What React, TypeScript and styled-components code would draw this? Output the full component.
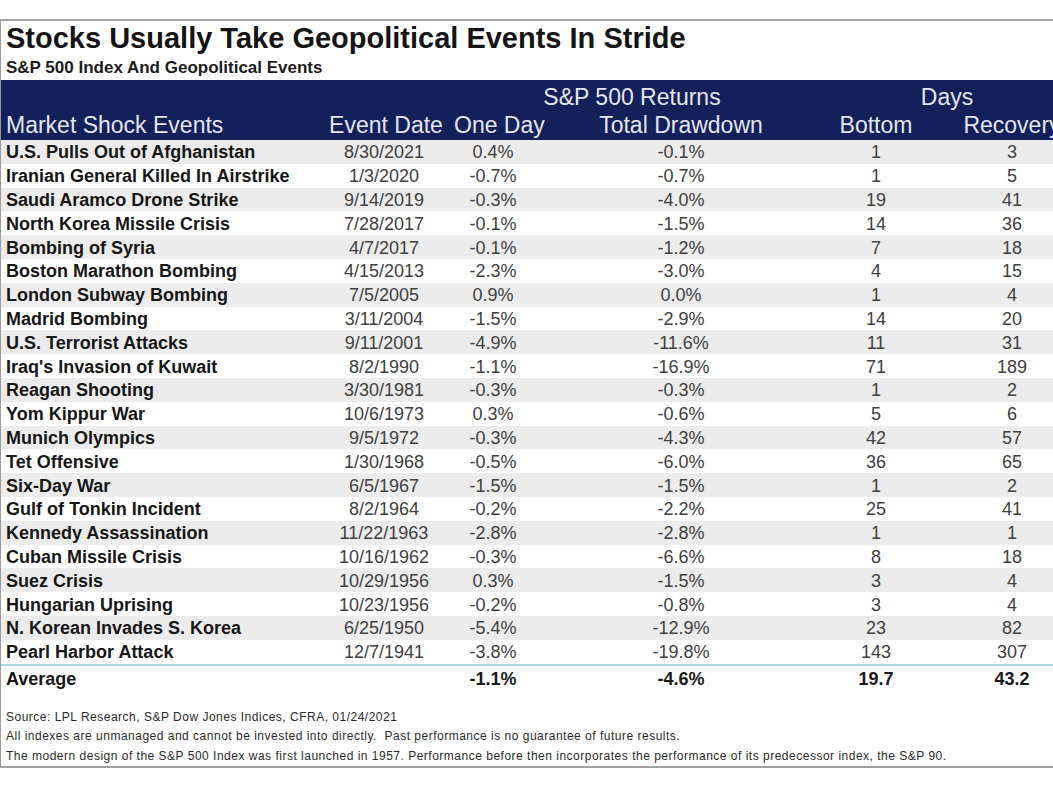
import React from "react";
import styled, { createGlobalStyle } from "styled-components";

const GlobalStyle = createGlobalStyle`
  html, body { margin: 0; padding: 0; background: #ffffff; }
  body { font-family: "Liberation Sans", Arial, sans-serif; overflow: hidden; }
`;

const Frame = styled.div`
  margin-top: 19px;
  width: 1053px;
  box-sizing: border-box;
  border-top: 2px solid #a4a4a4;
  border-left: 1px solid #9c9c9c;
  border-bottom: 2px solid #a0a0a0;
  overflow: hidden;
`;

const Title = styled.h1`
  margin: 0;
  padding-left: 5px;
  font-size: 29px;
  line-height: 35px;
  font-weight: 700;
  color: #141414;
  white-space: nowrap;
`;

const Subtitle = styled.h2`
  margin: 0;
  padding-left: 5px;
  font-size: 17px;
  line-height: 24px;
  font-weight: 700;
  color: #1c1c1c;
  white-space: nowrap;
`;

const COLS = "323px 120px 98px 278px 112px 160px";

const Table = styled.div`
  width: 1091px;
`;

const HeadBand = styled.div`
  background: #13205a;
  color: #e3e6f0;
  display: grid;
  grid-template-columns: ${COLS};
  grid-template-rows: 31px 29px;
  font-size: 23px;
  white-space: nowrap;
`;

const GroupHead = styled.div<{ $col: string; $shift?: number }>`
  grid-row: 1;
  grid-column: ${(p) => p.$col};
  display: flex;
  align-items: flex-end;
  justify-content: center;
  padding-right: ${(p) => p.$shift ?? 0}px;
  line-height: 28px;
`;

const ColHead = styled.div<{ $align?: "left" | "center"; $nudge?: number }>`
  grid-row: 2;
  text-align: ${(p) => p.$align ?? "center"};
  padding-left: ${(p) => (p.$align === "left" ? 5 : p.$nudge ?? 0)}px;
  line-height: 29px;
`;

const Row = styled.div<{ $shade: boolean }>`
  display: grid;
  grid-template-columns: ${COLS};
  box-sizing: border-box;
  height: 23.8px;
  padding-top: 2px;
  align-items: center;
  background: ${(p) => (p.$shade ? "#ececec" : "#ffffff")};
  font-size: 18px;
  white-space: nowrap;
`;

const AvgRow = styled(Row)`
  height: 27px;
  border-top: 2px solid #a9d8e4;
  font-weight: 700;
`;

const NameCell = styled.div`
  padding-left: 5px;
  font-weight: 700;
  color: #161616;
`;

const ValueCell = styled.div<{ $bold?: boolean }>`
  text-align: center;
  color: ${(p) => (p.$bold ? "#1a1a1a" : "#404040")};
  font-weight: ${(p) => (p.$bold ? 700 : 400)};
`;

const Footer = styled.div`
  margin-top: 17px;
  padding-left: 5px;
  font-size: 12px;
  letter-spacing: 0.5px;
  line-height: 19.5px;
  color: #2a2a2a;
  white-space: nowrap;
`;

type Ev = [string, string, string, string, string, string];

const events: Ev[] = [
  ["U.S. Pulls Out of Afghanistan", "8/30/2021", "0.4%", "-0.1%", "1", "3"],
  ["Iranian General Killed In Airstrike", "1/3/2020", "-0.7%", "-0.7%", "1", "5"],
  ["Saudi Aramco Drone Strike", "9/14/2019", "-0.3%", "-4.0%", "19", "41"],
  ["North Korea Missile Crisis", "7/28/2017", "-0.1%", "-1.5%", "14", "36"],
  ["Bombing of Syria", "4/7/2017", "-0.1%", "-1.2%", "7", "18"],
  ["Boston Marathon Bombing", "4/15/2013", "-2.3%", "-3.0%", "4", "15"],
  ["London Subway Bombing", "7/5/2005", "0.9%", "0.0%", "1", "4"],
  ["Madrid Bombing", "3/11/2004", "-1.5%", "-2.9%", "14", "20"],
  ["U.S. Terrorist Attacks", "9/11/2001", "-4.9%", "-11.6%", "11", "31"],
  ["Iraq's Invasion of Kuwait", "8/2/1990", "-1.1%", "-16.9%", "71", "189"],
  ["Reagan Shooting", "3/30/1981", "-0.3%", "-0.3%", "1", "2"],
  ["Yom Kippur War", "10/6/1973", "0.3%", "-0.6%", "5", "6"],
  ["Munich Olympics", "9/5/1972", "-0.3%", "-4.3%", "42", "57"],
  ["Tet Offensive", "1/30/1968", "-0.5%", "-6.0%", "36", "65"],
  ["Six-Day War", "6/5/1967", "-1.5%", "-1.5%", "1", "2"],
  ["Gulf of Tonkin Incident", "8/2/1964", "-0.2%", "-2.2%", "25", "41"],
  ["Kennedy Assassination", "11/22/1963", "-2.8%", "-2.8%", "1", "1"],
  ["Cuban Missile Crisis", "10/16/1962", "-0.3%", "-6.6%", "8", "18"],
  ["Suez Crisis", "10/29/1956", "0.3%", "-1.5%", "3", "4"],
  ["Hungarian Uprising", "10/23/1956", "-0.2%", "-0.8%", "3", "4"],
  ["N. Korean Invades S. Korea", "6/25/1950", "-5.4%", "-12.9%", "23", "82"],
  ["Pearl Harbor Attack", "12/7/1941", "-3.8%", "-19.8%", "143", "307"],
];

export default function App() {
  return (
    <>
      <GlobalStyle />
      <Frame>
        <Title>Stocks Usually Take Geopolitical Events In Stride</Title>
        <Subtitle>S&amp;P 500 Index And Geopolitical Events</Subtitle>
        <Table>
          <HeadBand>
            <GroupHead $col="3 / 5">S&amp;P 500 Returns</GroupHead>
            <GroupHead $col="5 / 7" $shift={18}>Days</GroupHead>
            <ColHead $align="left">Market Shock Events</ColHead>
            <ColHead $nudge={4}>Event Date</ColHead>
            <ColHead $nudge={10}>One Day</ColHead>
            <ColHead>Total Drawdown</ColHead>
            <ColHead>Bottom</ColHead>
            <ColHead>Recovery</ColHead>
          </HeadBand>
          {events.map((e, i) => (
            <Row key={e[0]} $shade={i % 2 === 0}>
              <NameCell>{e[0]}</NameCell>
              <ValueCell>{e[1]}</ValueCell>
              <ValueCell>{e[2]}</ValueCell>
              <ValueCell>{e[3]}</ValueCell>
              <ValueCell>{e[4]}</ValueCell>
              <ValueCell>{e[5]}</ValueCell>
            </Row>
          ))}
          <AvgRow $shade={false}>
            <NameCell>Average</NameCell>
            <ValueCell />
            <ValueCell $bold>-1.1%</ValueCell>
            <ValueCell $bold>-4.6%</ValueCell>
            <ValueCell $bold>19.7</ValueCell>
            <ValueCell $bold>43.2</ValueCell>
          </AvgRow>
        </Table>
        <Footer>
          <div>Source: LPL Research, S&amp;P Dow Jones Indices, CFRA, 01/24/2021</div>
          <div>All indexes are unmanaged and cannot be invested into directly.&nbsp; Past performance is no guarantee of future results.</div>
          <div>The modern design of the S&amp;P 500 Index was first launched in 1957. Performance before then incorporates the performance of its predecessor index, the S&amp;P 90.</div>
        </Footer>
      </Frame>
    </>
  );
}
